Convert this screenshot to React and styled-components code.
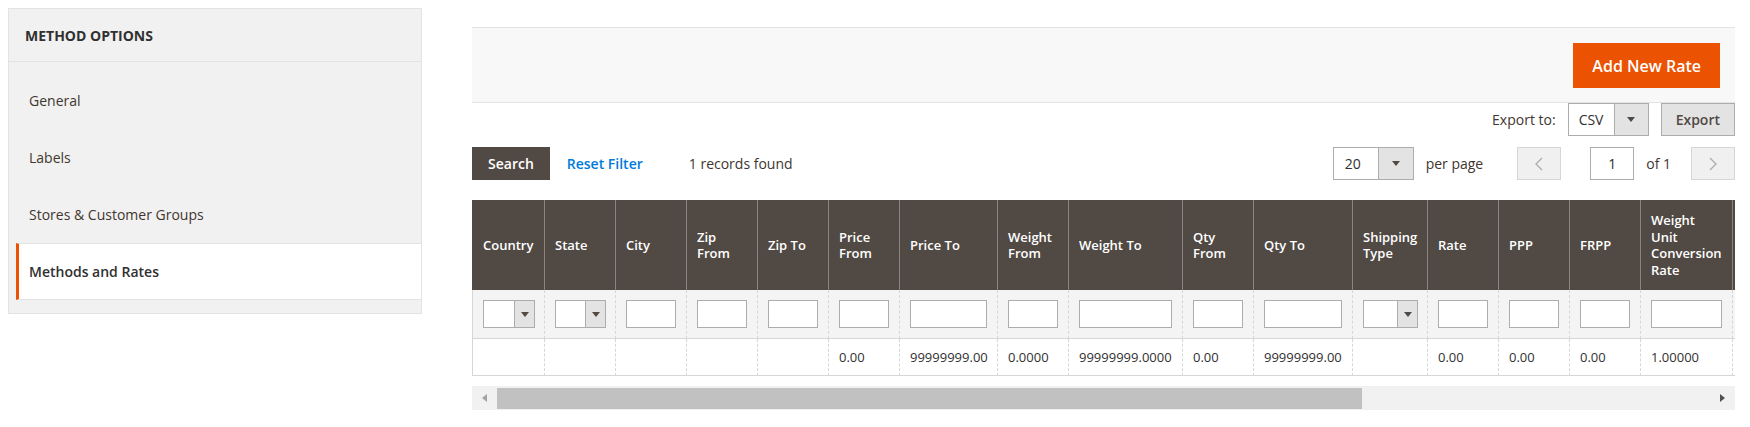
import React from "react";
import styled, { createGlobalStyle } from "styled-components";

const GlobalStyle = createGlobalStyle`
	body {
		margin: 0;
		background: #fff;
		font-family: "Open Sans", "Liberation Sans", sans-serif;
		color: #303030;
	}
	* {
		box-sizing: border-box;
	}
`;

const Page = styled.div`
	display: flex;
	align-items: flex-start;
	padding: 8px 15px 0 8px;
	gap: 50px;
`;

/* ---------- sidebar ---------- */

const Sidebar = styled.div`
	width: 414px;
	flex: none;
	background: #f1f1f1;
	border: 1px solid #e3e3e3;
	padding-bottom: 13px;
`;

const SidebarTitle = styled.div`
	height: 53px;
	display: flex;
	align-items: center;
	padding-left: 16px;
	border-bottom: 1px solid #e3e3e3;
	font-size: 14px;
	font-weight: 700;
	color: #303030;
	text-transform: uppercase;
	margin-bottom: 10px;
`;

const NavList = styled.div`
	display: flex;
	flex-direction: column;
	padding-left: 7px;
`;

const NavItem = styled.div`
	height: 57px;
	display: flex;
	align-items: center;
	padding-left: ${(p) => (p.active ? "10px" : "13px")};
	font-size: 14px;
	font-weight: ${(p) => (p.active ? 600 : 400)};
	color: ${(p) => (p.active ? "#303030" : "#41362f")};
	background: ${(p) => (p.active ? "#fff" : "transparent")};
	border-left: ${(p) => (p.active ? "3px solid #eb5202" : "none")};
	border-top: 1px solid ${(p) => (p.active ? "#e3e3e3" : "transparent")};
	border-bottom: 1px solid ${(p) => (p.active ? "#e3e3e3" : "transparent")};
`;

/* ---------- main area ---------- */

const Main = styled.div`
	flex: 1;
	min-width: 0;
	margin-top: 19px;
	display: flex;
	flex-direction: column;
`;

const ActionsPanel = styled.div`
	display: flex;
	justify-content: flex-end;
	background: #f8f8f8;
	border-top: 1px solid #e3e3e3;
	border-bottom: 1px solid #e3e3e3;
	padding: 15px 15px 14px;
`;

const PrimaryButton = styled.button`
	height: 45px;
	padding: 0 18px;
	background: #eb5202;
	border: 1px solid #eb5202;
	color: #fff;
	font-family: inherit;
	font-size: 16px;
	font-weight: 600;
	cursor: pointer;
`;

const ExportRow = styled.div`
	display: flex;
	justify-content: flex-end;
	align-items: center;
	height: 33px;
`;

const Label = styled.span`
	font-size: 14px;
	color: #41362f;
	margin-right: ${(p) => p.mr || 0}px;
	margin-left: ${(p) => p.ml || 0}px;
`;

const SelectBox = styled.div`
	display: flex;
	width: ${(p) => p.w}px;
	height: ${(p) => p.h || 33}px;
	border: 1px solid #adadad;
	background: #fff;
	flex: none;
`;

const SelectValue = styled.div`
	flex: 1;
	display: flex;
	align-items: center;
	padding-left: ${(p) => p.pl || 10}px;
	font-size: 14px;
	color: #303030;
`;

const SelectArrow = styled.div`
	width: ${(p) => p.w}px;
	background: #e3e3e3;
	border-left: 1px solid #adadad;
	display: flex;
	align-items: center;
	justify-content: center;

	&::after {
		content: "";
		border-left: 4px solid transparent;
		border-right: 4px solid transparent;
		border-top: 5px solid #514943;
	}
`;

const SecondaryButton = styled.button`
	height: 33px;
	margin-left: 12px;
	padding: 0 14px;
	background: #e3e3e3;
	border: 1px solid #adadad;
	color: #514943;
	font-family: inherit;
	font-size: 14px;
	font-weight: 600;
`;

const ToolbarRow = styled.div`
	display: flex;
	align-items: center;
	height: 33px;
	margin-top: 11px;
`;

const SearchButton = styled.button`
	height: 33px;
	padding: 0 15px;
	background: #514943;
	border: 1px solid #514943;
	color: #fff;
	font-family: inherit;
	font-size: 14px;
	font-weight: 600;
`;

const ResetLink = styled.span`
	margin-left: 17px;
	color: #007bdb;
	font-size: 14px;
	font-weight: 600;
`;

const Pager = styled.div`
	margin-left: auto;
	display: flex;
	align-items: center;
`;

const PageButton = styled.div`
	width: 44px;
	height: 33px;
	margin-left: ${(p) => p.ml || 0}px;
	background: #f0f0f0;
	border: 1px solid #d6d6d6;
	display: flex;
	align-items: center;
	justify-content: center;
`;

const PageInput = styled.div`
	width: 44px;
	height: 33px;
	margin-left: 29px;
	border: 1px solid #adadad;
	background: #fff;
	display: flex;
	align-items: center;
	justify-content: center;
	font-size: 14px;
	color: #303030;
`;

/* ---------- grid ---------- */

const GridWrap = styled.div`
	margin-top: 20px;
	overflow: hidden;
`;

const Table = styled.table`
	table-layout: fixed;
	border-collapse: separate;
	border-spacing: 0;
	width: 1360px;
`;

const Th = styled.th`
	background: #514943;
	color: #fff;
	font-size: 13px;
	font-weight: 600;
	line-height: 16.5px;
	text-align: left;
	vertical-align: middle;
	height: 90px;
	padding: 12px 8px 12px 10px;
	border-left: 1px solid #8a837f;

	&:first-child {
		border-left-color: #514943;
	}
`;

const FilterTd = styled.td`
	background: #f4f4f4;
	padding: 10px;
	border-left: 1px dashed #d6d6d6;
	border-bottom: 1px solid #d6d6d6;

	&:first-child {
		border-left: 1px solid #d6d6d6;
	}
`;

const TextInput = styled.div`
	height: 28px;
	width: 100%;
	background: #fff;
	border: 1px solid #adadad;
`;

const Td = styled.td`
	font-size: 13px;
	line-height: 18px;
	color: #303030;
	padding: 9px 10px;
	border-left: 1px dashed #d6d6d6;
	border-bottom: 1px solid #d6d6d6;
	white-space: nowrap;

	&:first-child {
		border-left: 1px solid #d6d6d6;
	}
`;

const Scrollbar = styled.div`
	display: flex;
	align-items: center;
	height: 24px;
	margin-top: 10px;
	background: #f1f1f1;
`;

const ScrollArrow = styled.div`
	width: 25px;
	height: 100%;
	flex: none;
	display: flex;
	align-items: center;
	justify-content: center;

	&::after {
		content: "";
		border-top: 4.5px solid transparent;
		border-bottom: 4.5px solid transparent;
		${(p) =>
			p.dir === "left"
				? "border-right: 5px solid #a3a3a3;"
				: "border-left: 5px solid #505050;"}
	}
`;

const ScrollThumb = styled.div`
	width: 865px;
	height: 21px;
	flex: none;
	background: #c1c1c1;
`;

const Spacer = styled.div`
	flex: 1;
`;

const Chevron = ({ dir }) => (
	<svg width="8" height="14" viewBox="0 0 8 14">
		<polyline
			points={dir === "left" ? "7,1 1,7 7,13" : "1,1 7,7 1,13"}
			fill="none"
			stroke="#adadad"
			strokeWidth="1.3"
		/>
	</svg>
);

const columns = [
	{ key: "country", title: "Country", w: 72, filter: "select" },
	{ key: "state", title: "State", w: 71, filter: "select" },
	{ key: "city", title: "City", w: 71 },
	{ key: "zipfrom", title: "Zip From", w: 71 },
	{ key: "zipto", title: "Zip To", w: 71 },
	{ key: "pricefrom", title: "Price From", w: 71, value: "0.00" },
	{ key: "priceto", title: "Price To", w: 98, value: "99999999.00" },
	{ key: "weightfrom", title: "Weight From", w: 71, value: "0.0000" },
	{ key: "weightto", title: "Weight To", w: 114, value: "99999999.0000" },
	{ key: "qtyfrom", title: "Qty From", w: 71, value: "0.00" },
	{ key: "qtyto", title: "Qty To", w: 99, value: "99999999.00" },
	{ key: "shipping", title: "Shipping Type", w: 75, filter: "select" },
	{ key: "rate", title: "Rate", w: 71, value: "0.00" },
	{ key: "ppp", title: "PPP", w: 71, value: "0.00" },
	{ key: "frpp", title: "FRPP", w: 71, value: "0.00" },
	{ key: "wucr", title: "Weight Unit Conversion Rate", w: 92, value: "1.00000" },
	{ key: "more", title: "", w: 100 },
];

const navItems = ["General", "Labels", "Stores & Customer Groups", "Methods and Rates"];

export default function App() {
	return (
		<>
			<GlobalStyle />
			<Page>
				<Sidebar>
					<SidebarTitle>Method Options</SidebarTitle>
					<NavList>
						{navItems.map((item) => (
							<NavItem key={item} active={item === "Methods and Rates"}>
								{item}
							</NavItem>
						))}
					</NavList>
				</Sidebar>

				<Main>
					<ActionsPanel>
						<PrimaryButton>Add New Rate</PrimaryButton>
					</ActionsPanel>

					<ExportRow>
						<Label mr={12}>Export to:</Label>
						<SelectBox w={81}>
							<SelectValue>CSV</SelectValue>
							<SelectArrow w={34} />
						</SelectBox>
						<SecondaryButton>Export</SecondaryButton>
					</ExportRow>

					<ToolbarRow>
						<SearchButton>Search</SearchButton>
						<ResetLink>Reset Filter</ResetLink>
						<Label ml={46}>1 records found</Label>
						<Pager>
							<SelectBox w={81}>
								<SelectValue pl={11}>20</SelectValue>
								<SelectArrow w={35} />
							</SelectBox>
							<Label ml={12}>per page</Label>
							<PageButton ml={34}>
								<Chevron dir="left" />
							</PageButton>
							<PageInput>1</PageInput>
							<Label ml={12}>of 1</Label>
							<PageButton ml={20}>
								<Chevron dir="right" />
							</PageButton>
						</Pager>
					</ToolbarRow>

					<GridWrap>
						<Table>
							<colgroup>
								{columns.map((c) => (
									<col key={c.key} style={{ width: c.w }} />
								))}
							</colgroup>
							<thead>
								<tr>
									{columns.map((c) => (
										<Th key={c.key}>{c.title}</Th>
									))}
								</tr>
							</thead>
							<tbody>
								<tr>
									{columns.map((c) => (
										<FilterTd key={c.key}>
											{c.filter === "select" ? (
												<SelectBox w={c.w - 20} h={28}>
													<SelectValue />
													<SelectArrow w={20} />
												</SelectBox>
											) : (
												<TextInput />
											)}
										</FilterTd>
									))}
								</tr>
								<tr>
									{columns.map((c) => (
										<Td key={c.key}>{c.value || ""}</Td>
									))}
								</tr>
							</tbody>
						</Table>
					</GridWrap>

					<Scrollbar>
						<ScrollArrow dir="left" />
						<ScrollThumb />
						<Spacer />
						<ScrollArrow dir="right" />
					</Scrollbar>
				</Main>
			</Page>
		</>
	);
}
